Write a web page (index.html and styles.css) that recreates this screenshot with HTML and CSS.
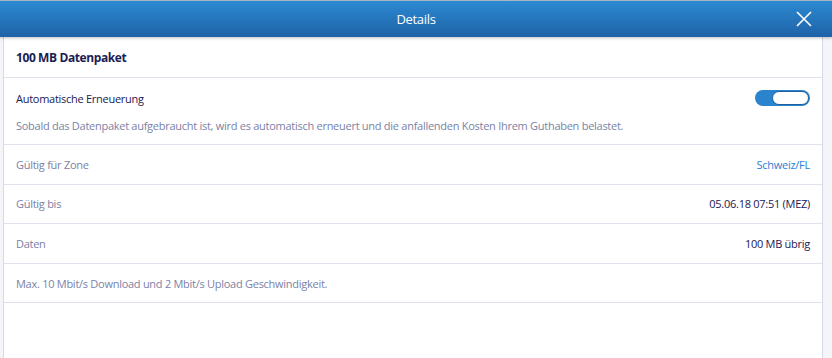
FILE: index.html
```html
<!DOCTYPE html>
<html>
	<head>
		<meta charset="UTF-8">
		<title>Details</title>
		<link rel="stylesheet" href="styles.css">
	</head>
	<body>
		<div class="modal">
			<div class="modal-head">
				<span class="modal-title">Details</span>
				<span class="modal-close">
					<svg width="16" height="16" viewBox="0 0 16 16"><path d="M1 1L15 15M15 1L1 15" stroke="#fff" stroke-width="1.6" fill="none"/></svg>
				</span>
			</div>
			<div class="modal-body">
				<ul class="info">
					<li class="row title">100 MB Datenpaket</li>
					<li class="row renew">
						<div class="line">
							<span class="label dark">Automatische Erneuerung</span>
							<span class="toggle"><span class="knob"></span></span>
						</div>
						<p class="note">Sobald das Datenpaket aufgebraucht ist, wird es automatisch erneuert und die anfallenden Kosten Ihrem Guthaben belastet.</p>
					</li>
					<li class="row line">
						<span class="label">Gültig für Zone</span>
						<a class="value link" href="#">Schweiz/FL</a>
					</li>
					<li class="row line">
						<span class="label">Gültig bis</span>
						<span class="value">05.06.18 07:51 (MEZ)</span>
					</li>
					<li class="row line">
						<span class="label">Daten</span>
						<span class="value">100 MB übrig</span>
					</li>
					<li class="row">
						<span class="label">Max. 10 Mbit/s Download und 2 Mbit/s Upload Geschwindigkeit.</span>
					</li>
				</ul>
			</div>
		</div>
	</body>
</html>
```

FILE: styles.css
```css
*{
	margin: 0;
	padding: 0;
	box-sizing: border-box;
}
html, body{
	height: 100%;
}
body{
	background: #f4f5f9;
	font-family: "Open Sans", "Liberation Sans", sans-serif;
	font-size: 11px;
	letter-spacing: -0.27px;
	color: #7a82a6;
}
.modal{
	height: 100%;
	display: flex;
	flex-direction: column;
}
.modal-head{
	height: 37px;
	flex: none;
	display: flex;
	align-items: center;
	justify-content: center;
	position: relative;
	border-top: 1px solid #a9b4c2;
	background: linear-gradient(#2b8ad2, #1f62a7);
	box-shadow: 0 1px 3px rgba(0,0,0,0.25);
	z-index: 1;
}
.modal-title{
	color: #fff;
	font-size: 13px;
	letter-spacing: -0.3px;
}
.modal-close{
	position: absolute;
	right: 20px;
	top: 10px;
	line-height: 0;
}
.modal-body{
	flex: 1;
	margin: 0 9px 0 3px;
	background: #fff;
	border-left: 1px solid #d6d9e6;
	border-right: 1px solid #d6d9e6;
}
.info{
	list-style: none;
	margin: 0 -1px;
	border-left: 1px solid #d6d9e6;
	border-right: 1px solid #d6d9e6;
}
.row{
	padding: 0 12px;
	min-height: 39.6px;
	display: flex;
	align-items: center;
	border-bottom: 1px solid #dfe2ec;
}
.row.line{
	justify-content: space-between;
}
.title{
	min-height: 41px;
	font-size: 12px;
	font-weight: bold;
	letter-spacing: -0.4px;
	color: #1b2052;
}
.renew{
	display: block;
	min-height: 67px;
	padding-top: 12px;
	padding-bottom: 11px;
}
.renew .line{
	display: flex;
	justify-content: space-between;
	align-items: center;
}
.dark{
	color: #1b2052;
}
.note{
	margin-top: 12px;
}
.value{
	color: #1b2052;
}
.link{
	color: #2a80d6;
	text-decoration: none;
}
.toggle{
	width: 55px;
	height: 16px;
	border-radius: 8px;
	background: #2a84cd;
	display: flex;
	justify-content: flex-end;
	padding: 1px 1px;
}
.knob{
	width: 37px;
	height: 14px;
	border-radius: 7px;
	background: #fff;
	border: 1.5px solid #1e5f9e;
}
```
